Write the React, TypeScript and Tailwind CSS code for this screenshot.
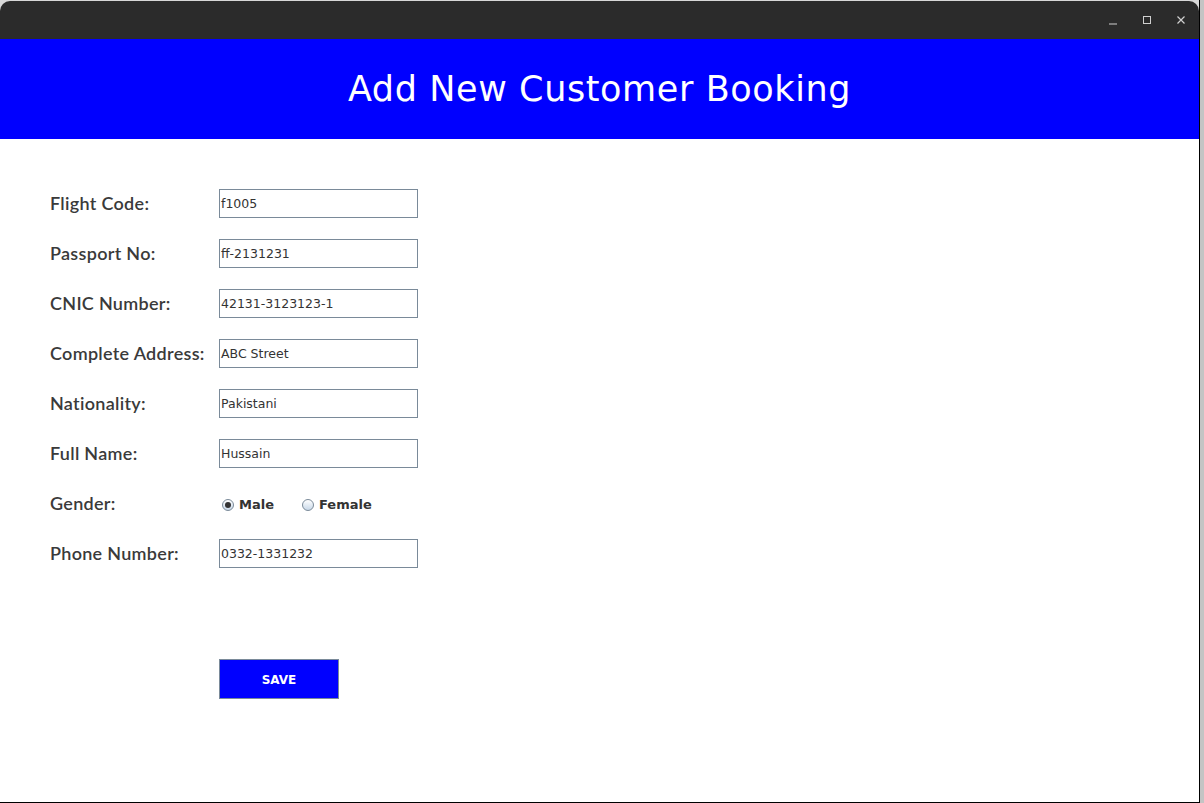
import React from 'react';

const fields = [
  { label: 'Flight Code:', value: 'f1005' },
  { label: 'Passport No:', value: 'ff-2131231' },
  { label: 'CNIC Number:', value: '42131-3123123-1' },
  { label: 'Complete Address:', value: 'ABC Street' },
  { label: 'Nationality:', value: 'Pakistani' },
  { label: 'Full Name:', value: 'Hussain' },
];

function Label({ text }: { text: string }) {
  return (
    <div className="w-[169px] shrink-0 text-[18px] tracking-[0.3px] font-semibold text-[#3a3a3a] font-['Lato','Open_Sans',sans-serif]">
      {text}
    </div>
  );
}

function Field({ value }: { value: string }) {
  return (
    <div className="flex h-[29px] w-[199px] items-center border border-[#7a8a99] bg-white pl-[1px] pt-[2px] text-[12.5px] text-[#333333] font-['DejaVu_Sans',sans-serif]">
      {value}
    </div>
  );
}

function Radio({ checked, label }: { checked: boolean; label: string }) {
  return (
    <div className="flex items-center gap-[5px]">
      <span className="flex h-[12px] w-[12px] items-center justify-center rounded-full border border-[#7a8a99] bg-gradient-to-b from-white to-[#c8d8e8]">
        {checked && <span className="h-[6px] w-[6px] rounded-full bg-[#333333]" />}
      </span>
      <span className="text-[13px] font-bold text-[#333333] font-['DejaVu_Sans',sans-serif]">{label}</span>
    </div>
  );
}

export default function App() {
  return (
    <div className="flex h-[803px] w-[1204px] bg-[#c4c4c4]">
      <div className="flex h-[803px] w-[1200px] flex-col border-r border-b border-black pt-[1px] bg-[#d8d8d8]">
        {/* title bar */}
        <div className="flex h-[38px] shrink-0 items-center justify-end rounded-t-[10px] bg-[#2b2b2b] pr-[12px] text-[#cfcfcf]">
          <div className="flex items-center gap-[22px]">
            <svg width="12" height="12" viewBox="0 0 12 12">
              <line x1="2" y1="10" x2="10" y2="10" stroke="#d0d0d0" strokeWidth="1" />
            </svg>
            <svg width="12" height="12" viewBox="0 0 12 12">
              <rect x="2.5" y="2.5" width="7" height="7" fill="none" stroke="#d0d0d0" strokeWidth="1" />
            </svg>
            <svg width="12" height="12" viewBox="0 0 12 12">
              <path d="M2.5 2.5 L9.5 9.5 M9.5 2.5 L2.5 9.5" stroke="#d0d0d0" strokeWidth="1.2" />
            </svg>
          </div>
        </div>

        {/* header */}
        <div className="flex h-[100px] shrink-0 items-center justify-center bg-[#0000ff]">
          <h1 className="text-[35px] text-white tracking-[0.6px] font-['DejaVu_Sans',sans-serif]">
            Add New Customer Booking
          </h1>
        </div>

        {/* form */}
        <div className="flex flex-1 flex-col bg-white pl-[50px] pt-[50px]">
          <div className="flex flex-col gap-[21px]">
            {fields.map((f) => (
              <div key={f.label} className="flex h-[29px] items-center">
                <Label text={f.label} />
                <Field value={f.value} />
              </div>
            ))}
            <div className="flex h-[29px] items-center">
              <Label text="Gender:" />
              <div className="flex items-center gap-[28px] pl-[3px] pt-[2px]">
                <Radio checked label="Male" />
                <Radio checked={false} label="Female" />
              </div>
            </div>
            <div className="flex h-[29px] items-center">
              <Label text="Phone Number:" />
              <Field value="0332-1331232" />
            </div>
          </div>
          <div className="mt-[91px] pl-[169px]">
            <button className="flex h-[40px] w-[120px] items-center justify-center border border-[#7a8a99] bg-[#0000ff] pt-[2px] text-[12px] font-bold text-white font-['DejaVu_Sans',sans-serif]">
              SAVE
            </button>
          </div>
        </div>
      </div>
    </div>
  );
}
